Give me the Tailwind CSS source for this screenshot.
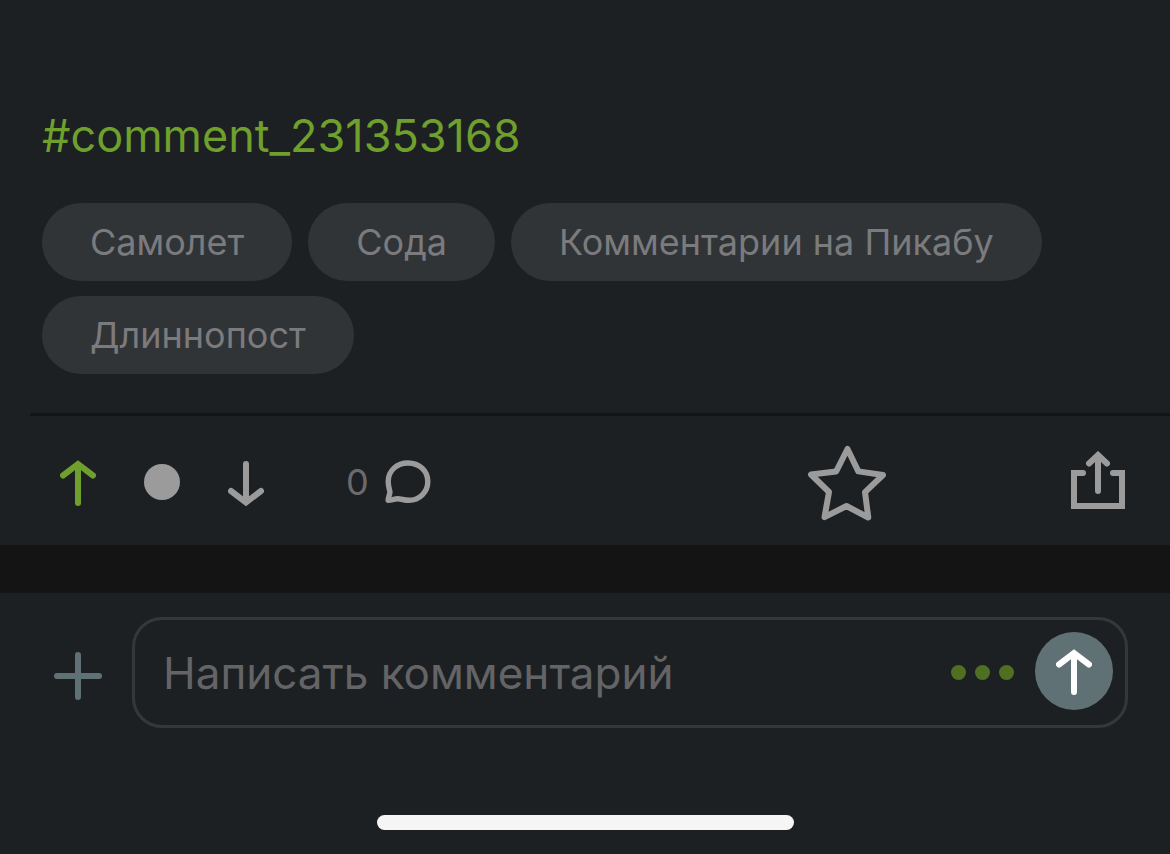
<!DOCTYPE html>
<html lang="ru">
  <head>
    <meta charset="UTF-8" />
    <meta name="viewport" content="width=device-width, initial-scale=1.0" />
    <script src="https://cdn.jsdelivr.net/npm/@tailwindcss/browser@4"></script>
    <title>Комментарии</title>
  </head>
  <body
    class="min-h-screen flex flex-col bg-[#1d2023] font-['Inter','Roboto',sans-serif]"
  >
    <article>
      <div class="px-[42px] pt-[108px] pb-[39px]">
        <a href="#comment_231353168" class="block text-[45px] leading-14 text-[#6f9f2c]"
          >#comment_231353168</a
        >
        <nav class="flex flex-wrap gap-4 gap-y-[15px] mt-[39px] text-[36px] leading-[78px] text-[#7b7b7e]">
          <a href="#" class="rounded-full bg-[#313437] px-12">Самолет</a>
          <a href="#" class="rounded-full bg-[#313437] px-12">Сода</a>
          <a href="#" class="rounded-full bg-[#313437] px-12">Комментарии на Пикабу</a>
          <a href="#" class="rounded-full bg-[#313437] px-12">Длиннопост</a>
        </nav>
      </div>

      <!-- post actions -->
      <div class="ml-[30px] border-t-3 border-[#141414]"></div>
      <div class="flex items-center h-[129px] pl-9 pr-[42px] pt-[3px] text-[#9b9b9b]">
        <button type="button" aria-label="Плюс" class="w-[84px] flex justify-center text-[#6f9f2c]">
          <svg class="w-9 h-12" viewBox="0 0 36 48" fill="none" stroke="currentColor" stroke-width="6" stroke-linecap="round">
            <path d="M18 45V7M3 17.5L18 6L33 17.5" />
          </svg>
        </button>
        <button type="button" aria-label="Рейтинг" class="w-[84px] flex justify-center">
          <span class="size-9 rounded-full bg-[#9b9b9b]"></span>
        </button>
        <button type="button" aria-label="Минус" class="w-[84px] flex justify-center">
          <svg class="w-9 h-12" viewBox="0 0 36 48" fill="none" stroke="currentColor" stroke-width="6" stroke-linecap="round">
            <path d="M18 6V43M3 33L18 44.5L33 33" />
          </svg>
        </button>
        <button type="button" aria-label="Комментарии" class="flex items-center gap-4 ml-[58px]">
          <span class="text-[36px] leading-10 text-[#6b6b6d]">0</span>
          <svg class="w-[46px] h-11" viewBox="0 0 46 44" fill="none" stroke="currentColor" stroke-width="5.4" stroke-linejoin="round">
            <path d="M3.2 40.2C3.2 36.5 5 34.5 4.9 32C4.8 29.5 3.2 27 3.2 21.5C3.2 10.5 12 3 23 3C34.5 3 42.8 11 42.8 21.5C42.8 32 34.5 40.3 24 40.3C19 40.3 16.5 38.8 12.5 38.8C9 38.8 6.5 40.3 3.2 40.2Z" />
          </svg>
        </button>
        <button type="button" aria-label="Сохранить" class="ml-auto">
          <svg class="w-20 h-[78px]" viewBox="0 0 80 78" fill="none" stroke="currentColor" stroke-width="6" stroke-linejoin="round">
            <path d="M40.5 6L51.3 28.4L76 32L58 49.2L61.3 74.5L39.5 63L17.5 74.2L22 49L4 31.5L29.2 28.4Z" />
          </svg>
        </button>
        <button type="button" aria-label="Поделиться" class="ml-[184px] mr-[3px]">
          <svg class="w-[54px] h-[62px]" viewBox="0 0 54 62" fill="none" stroke="currentColor" stroke-width="6" stroke-linecap="round">
            <path d="M27 40V5M18 12.5L27 4L36 12.5M12 22H3V55H51V22H42" />
          </svg>
        </button>
      </div>
    </article>

    <div class="h-12 bg-[#141414]"></div>

    <!-- new comment -->
    <form class="flex items-center gap-[30px] pt-6 pl-[54px] pr-[42px]">
      <button type="button" aria-label="Прикрепить" class="mt-1.5 text-[#607176]">
        <svg class="size-12" viewBox="0 0 48 48" fill="none" stroke="currentColor" stroke-width="6" stroke-linecap="round">
          <path d="M24 3V45M3 24H45" />
        </svg>
      </button>
      <div class="flex flex-1 items-center h-[111px] rounded-[30px] border-3 border-[#35383b] pl-7 pr-3">
        <input
          type="text"
          aria-label="Написать комментарий"
          placeholder="Написать комментарий"
          class="flex-1 min-w-0 text-[44px] leading-14 text-white placeholder:text-[#646466] outline-none"
        />
        <button type="button" aria-label="Ещё" class="flex gap-[9px] mr-[21px]">
          <span class="size-[15px] rounded-full bg-[#4f6f22]"></span>
          <span class="size-[15px] rounded-full bg-[#4f6f22]"></span>
          <span class="size-[15px] rounded-full bg-[#4f6f22]"></span>
        </button>
        <button
          type="submit"
          aria-label="Отправить"
          class="flex items-center justify-center size-[78px] mb-[3px] rounded-full bg-[#607176] text-white"
        >
          <svg class="w-9 h-12" viewBox="0 0 36 48" fill="none" stroke="currentColor" stroke-width="6" stroke-linecap="round">
            <path d="M18 45V7M3 17.5L18 6L33 17.5" />
          </svg>
        </button>
      </div>
    </form>

    <div class="mt-auto mb-6 mx-auto w-[417px] h-[15px] rounded-full bg-[#f5f5f5]"></div>
  </body>
</html>
